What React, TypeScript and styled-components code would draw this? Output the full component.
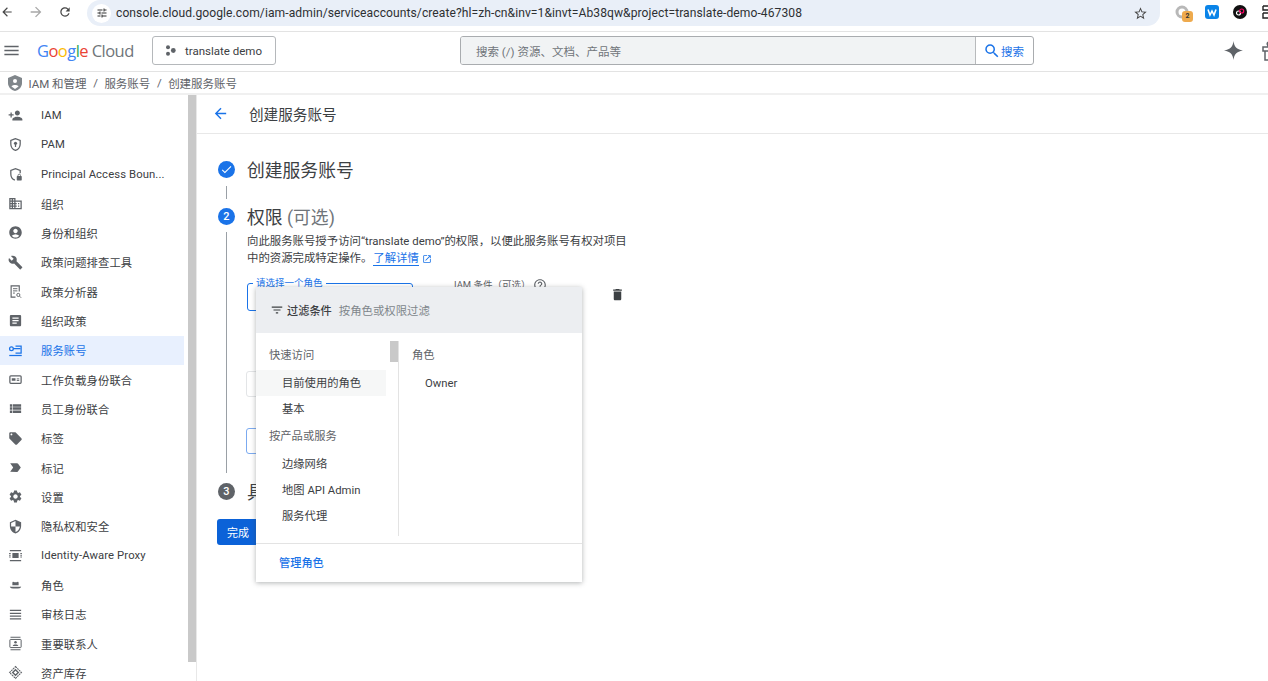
import React from "react";
import styled, { createGlobalStyle } from "styled-components";
import {
  MdArrowBack,
  MdArrowForward,
  MdRefresh,
  MdTune,
  MdStarBorder,
  MdMenu,
  MdSearch,
  MdDelete,
  MdCheck,
  MdFilterList,
  MdOpenInNew,
  MdHelpOutline,
  MdPersonAdd,
  MdOutlineDomain,
  MdAccountCircle,
  MdBuild,
  MdArticle,
  MdViewList,
  MdLocalOffer,
  MdLabelImportant,
  MdSettings,
  MdSecurity,
} from "react-icons/md";

const SANS = `Roboto, "Noto Sans CJK SC", sans-serif`;

const GlobalStyle = createGlobalStyle`
  html, body {
    margin: 0;
    padding: 0;
    height: 100%;
    overflow: hidden;
    background: #fff;
    font-family: ${SANS};
    color: #3c4043;
  }
  * { box-sizing: border-box; }
`;

const Page = styled.div`
  width: 1268px;
  height: 681px;
  display: flex;
  flex-direction: column;
  overflow: hidden;
`;

/* browser chrome */
const BrowserBar = styled.div`
  height: 32px;
  flex: none;
  display: flex;
  align-items: flex-start;
  border-bottom: 1px solid #e3e3e3;
`;

const NavButton = styled.span<{ $off?: boolean; $w: number }>`
  width: ${({ $w }) => $w}px;
  margin-top: 4px;
  flex: none;
  display: flex;
  justify-content: center;
  color: ${({ $off }) => ($off ? "#a8a8a8" : "#474747")};
  svg { width: 16px; height: 16px; }
`;

const UrlPill = styled.div`
  width: 1073px;
  height: 26px;
  margin-left: 15px;
  flex: none;
  padding: 0 12px 0 5px;
  background: #e9eff8;
  border-radius: 13px;
  border-top-right-radius: 0;
  display: flex;
  align-items: center;
  gap: 5px;
`;

const SiteBadge = styled.span`
  width: 19px;
  height: 19px;
  border-radius: 50%;
  background: #fff;
  display: flex;
  align-items: center;
  justify-content: center;
  color: #333;
  svg { width: 12px; height: 12px; }
`;

const UrlText = styled.span`
  flex: 1;
  font: 400 12.1px ${SANS};
  color: #2e3033;
  white-space: nowrap;
  letter-spacing: 0.07px;
`;

const Extensions = styled.div`
  flex: 1;
  display: flex;
  align-items: center;
  margin-top: 5px;
  padding-left: 15px;
`;

const ExtSlot = styled.span<{ $w: number }>`
  width: ${({ $w }) => $w}px;
  flex: none;
  position: relative;
  display: flex;
`;

const ExtBadge = styled.span`
  position: absolute;
  left: 7px;
  top: 6px;
  width: 11px;
  height: 11px;
  border-radius: 3px;
  background: #eeaa4d;
  font: 700 7px/11px ${SANS};
  text-align: center;
  color: #333;
`;

/* console header */
const Header = styled.header`
  height: 40px;
  flex: none;
  display: flex;
  align-items: center;
  padding-bottom: 2px;
  border-bottom: 1px solid #e3e3e3;
`;

const Burger = styled.span`
  width: 38px;
  flex: none;
  padding-left: 2px;
  display: flex;
  color: #5f6368;
  svg { width: 19px; height: 19px; }
`;

const Logo = styled.div`
  width: 115px;
  flex: none;
  margin-left: -1px;
  font: 400 16.5px "Open Sans", ${SANS};
  letter-spacing: -0.55px;
  color: #70757a;
  white-space: nowrap;
`;

const LogoLetter = styled.span<{ $c: string }>`
  color: ${({ $c }) => $c};
`;

const ProjectButton = styled.div`
  width: 124px;
  height: 29px;
  flex: none;
  border: 1px solid #b5b8bb;
  border-radius: 3px;
  display: flex;
  align-items: center;
  gap: 9px;
  padding-left: 12px;
  font: 400 11.5px ${SANS};
  color: #3c4043;
`;

const SearchGroup = styled.div`
  margin-left: 184px;
  width: 574px;
  height: 29px;
  flex: none;
  display: flex;
  border: 1px solid #a9acaf;
  border-radius: 3px;
  overflow: hidden;
`;

const SearchInput = styled.div`
  flex: 1;
  background: #f1f3f4;
  border-right: 1px solid #b8babc;
  display: flex;
  align-items: center;
  padding-left: 15px;
  font: 400 11.5px ${SANS};
  color: #70757a;
`;

const SearchButton = styled.div`
  width: 57px;
  display: flex;
  align-items: center;
  padding-left: 7px;
  font: 400 11.5px ${SANS};
  color: #1a73e8;
  svg { width: 18px; height: 18px; }
`;

const HeaderIcons = styled.div`
  margin-left: 190px;
  display: flex;
  align-items: center;
  gap: 19px;
  color: #5f6368;
`;

/* breadcrumb */
const Crumbs = styled.nav`
  height: 23px;
  flex: none;
  display: flex;
  align-items: center;
  gap: 6.500px;
  padding-left: 8px;
  font: 400 11.5px ${SANS};
  color: #5f6368;
  border-bottom: 2px solid #f0f0f0;
`;

const CrumbShield = styled.span`
  display: flex;
  color: #80868b;
`;

/* body */
const Body = styled.div`
  flex: 1;
  min-height: 0;
  display: flex;
`;

const Sidebar = styled.aside`
  width: 197px;
  flex: none;
  display: flex;
  position: relative;
  border-right: 1px solid #e8e8e8;
  overflow: hidden;
`;

const NavList = styled.ul`
  list-style: none;
  margin: 6px 0 0;
  padding: 0;
  width: 184px;
  flex: none;
`;

const NavItem = styled.li<{ $active?: boolean }>`
  height: 29.33px;
  display: flex;
  align-items: center;
  padding-left: 8px;
  gap: 18px;
  font: 400 11.3px ${SANS};
  white-space: nowrap;
  background: ${({ $active }) => ($active ? "#e8f0fe" : "transparent")};
  color: ${({ $active }) => ($active ? "#1a73e8" : "#3c4043")};
  letter-spacing: 0.1px;
  svg {
    width: 15px;
    height: 15px;
    flex: none;
    color: ${({ $active }) => ($active ? "#1a73e8" : "#5f6368")};
  }
`;

const SideScrollThumb = styled.div`
  position: absolute;
  left: 188px;
  top: 0;
  width: 8px;
  height: 567px;
  background: #c9c9c9;
`;

const Main = styled.main`
  flex: 1;
  min-width: 0;
  position: relative;
`;

const TitleBar = styled.div`
  height: 39px;
  display: flex;
  align-items: center;
  padding: 0 0 2px 15px;
  gap: 20px;
  border-bottom: 1px solid #e8e8e8;
  font: 400 14.6px ${SANS};
  color: #3c4043;
  svg { width: 17px; height: 17px; color: #1a73e8; }
`;

const Steps = styled.div`
  padding: 23px 0 0 21px;
  width: 460px;
  display: flex;
  flex-direction: column;
`;

const StepHead = styled.div`
  display: flex;
  align-items: center;
  gap: 12px;
  height: 24px;
  font: 400 17.8px ${SANS};
  color: #3c4043;
`;

const StepDot = styled.span<{ $grey?: boolean }>`
  width: 17px;
  height: 17px;
  flex: none;
  border-radius: 50%;
  background: ${({ $grey }) => ($grey ? "#5f6368" : "#1a73e8")};
  color: #fff;
  font: 500 11px/17px ${SANS};
  text-align: center;
  display: flex;
  align-items: center;
  justify-content: center;
  svg { width: 13px; height: 13px; }
`;

const Optional = styled.span`
  color: #70757a;
`;

const Connector = styled.div`
  margin: 5px 0 5px 8px;
  width: 1px;
  height: 13px;
  background: #9aa0a6;
`;

const StepBody = styled.div`
  margin-left: 8px;
  margin-top: 4px;
  height: 241px;
  border-left: 1px solid #9aa0a6;
  padding: 1px 0 0 20px;
  display: flex;
  flex-direction: column;
`;

const DescLine = styled.div`
  height: 17px;
  font: 400 11.4px/17px ${SANS};
  color: #3c4043;
  white-space: nowrap;
  display: flex;
  align-items: center;
`;

const LearnMore = styled.a`
  color: #1a73e8;
  line-height: 14px;
  border-bottom: 1px solid #1a73e8;
  margin: 0 3px 0 1px;
`;

const RoleRow = styled.div`
  margin-top: 10px;
  height: 34px;
  display: flex;
  align-items: flex-start;
`;

const RoleField = styled.div`
  width: 166px;
  height: 28px;
  margin-top: 6px;
  border: 1.5px solid #1a73e8;
  border-radius: 3px;
  position: relative;
`;

const RoleLabel = styled.span`
  position: absolute;
  left: 5px;
  top: -7px;
  padding: 0 3px;
  background: #fff;
  font: 400 9.5px/12px ${SANS};
  color: #1a73e8;
`;

const ConditionLabel = styled.div`
  margin-left: 41px;
  margin-top: 1px;
  width: 156px;
  display: flex;
  align-items: center;
  gap: 2px;
  font: 400 9.500px/12px ${SANS};
  color: #5f6368;
  svg { width: 14px; height: 14px; }
`;

const Trash = styled.span`
  margin-top: 10px;
  color: #3c4043;
  display: flex;
  svg { width: 15px; height: 15px; }
`;

const GhostInput = styled.div`
  margin: 60px 0 0 -1px;
  width: 120px;
  height: 26px;
  border: 1px solid #e3e5e7;
  border-radius: 3px;
`;

const GhostButton = styled.div`
  margin: 31px 0 0 -1px;
  width: 120px;
  height: 26px;
  border: 1px solid #7baaf0;
  border-radius: 3px;
`;

const ThirdStep = styled(StepHead)`
  margin-top: 6px;
`;

const DoneButton = styled.button`
  margin: 16px 0 0 -1px;
  width: 60px;
  height: 26px;
  border: 0;
  border-radius: 3px;
  background: #0b62d8;
  color: #fff;
  padding: 0 0 0 10px;
  font: 400 11px ${SANS};
  text-align: left;
`;

/* role picker popup */
const Popup = styled.div`
  position: absolute;
  left: 59px;
  top: 192px;
  width: 326px;
  height: 295px;
  background: #fff;
  display: flex;
  flex-direction: column;
  box-shadow: 0 1px 5px rgba(60, 64, 67, 0.4);
`;

const PopupFilter = styled.div`
  height: 46px;
  flex: none;
  background: #eceef1;
  display: flex;
  align-items: center;
  padding-left: 14px;
  font: 500 11.2px ${SANS};
  color: #3c4043;
  svg { width: 14px; height: 14px; margin-right: 3px; }
`;

const FilterHint = styled.span`
  margin-left: 7px;
  font-weight: 400;
  font-size: 11.4px;
  color: #80868b;
`;

const PopupPanes = styled.div`
  flex: 1;
  min-height: 0;
  display: flex;
  padding-top: 8px;
`;

const LeftPane = styled.div`
  width: 143px;
  flex: none;
  height: 195px;
  border-right: 1px solid #e3e3e3;
  position: relative;
`;

const PaneThumb = styled.div`
  position: absolute;
  right: 0;
  top: 0;
  width: 8px;
  height: 21px;
  background: #c9c9c9;
`;

const GroupTitle = styled.div`
  height: 29px;
  padding-left: 13px;
  font: 400 11.3px/30px ${SANS};
  color: #5f6368;
`;

const PaneItem = styled.div<{ $hover?: boolean }>`
  height: 26px;
  width: 130px;
  padding: 1px 0 0 26px;
  font: 400 11.3px/26px ${SANS};
  color: #3c4043;
  background: ${({ $hover }) => ($hover ? "#f6f7f7" : "transparent")};
`;

const RightPane = styled.div`
  flex: 1;
`;

const PopupFooter = styled.div`
  height: 39px;
  flex: none;
  margin-top: 7px;
  padding: 0 0 2px 23px;
  border-top: 1px solid #e3e3e3;
  display: flex;
  align-items: center;
  font: 500 11.2px ${SANS};
  color: #1a73e8;
`;

/* side nav glyphs that the icon packages do not have */
const Glyph = ({ children }: { children: React.ReactNode }) => (
  <svg viewBox="0 0 24 24" fill="none" stroke="currentColor" strokeWidth="2">
    {children}
  </svg>
);

const PamIcon = () => (
  <Glyph>
    <path d="M12 2.500 4.500 5.500v5.500c0 4.800 3.200 8.800 7.500 10.500 4.300-1.700 7.500-5.700 7.500-10.500V5.500z" />
    <circle cx="12" cy="10" r="2.500" fill="currentColor" stroke="none" />
    <path d="M12 11v5" />
  </Glyph>
);

const BoundaryIcon = () => (
  <Glyph>
    <path d="M11 21C7 19.500 4.500 15.500 4.500 11V5.500L12 2.500l7.500 3V10" />
    <rect x="14" y="14.500" width="8" height="7" rx="1" fill="currentColor" stroke="none" />
    <path d="M16 15v-1.500a2 2 0 0 1 4 0V15" strokeWidth="1.300" />
  </Glyph>
);

const AnalyzerIcon = () => (
  <Glyph>
    <path d="M12 21H5V3h13v9" strokeWidth="1.800" />
    <path d="M8 7.500h7M8 11h7M8 14.500h3" strokeWidth="1.500" />
    <circle cx="16.500" cy="17.500" r="2.500" strokeWidth="1.500" />
    <path d="m18.500 19.500 2.500 2.500" strokeWidth="1.500" />
  </Glyph>
);

const ServiceAccountIcon = () => (
  <Glyph>
    <circle cx="5.500" cy="9" r="3" />
    <path d="M8.500 9H20" />
    <path d="M12 5h9v11h-9" />
    <path d="M2 20h20" />
  </Glyph>
);

const WorkloadIcon = () => (
  <Glyph>
    <rect x="3" y="6" width="18" height="12" rx="1.500" />
    <rect x="6" y="10" width="6" height="4" fill="currentColor" stroke="none" />
    <path d="M14 11h4M14 13.500h4" strokeWidth="1.500" />
  </Glyph>
);

const ProxyIcon = () => (
  <Glyph>
    <path d="M3 4h18M3 20h18" />
    <rect x="7" y="8" width="10" height="8" fill="currentColor" stroke="none" />
    <path d="M3 8v8M21 8v8" strokeDasharray="2 1.500" strokeWidth="2.500" />
  </Glyph>
);

const HatIcon = () => (
  <svg viewBox="0 0 24 24" fill="currentColor">
    <path d="M7 13V9.500C7 8 8 7.500 9 7.800c2 .6 4 .6 6 0 1-.3 2 .2 2 1.700V13z" />
    <path d="M3 15c3 .8 15 .8 18 0 0 2.500-3 3.500-9 3.500S3 17.500 3 15z" />
  </svg>
);

const AuditIcon = () => (
  <Glyph>
    <path d="M3 5.500h18M3 10h18M3 14.500h18M3 19h18" />
  </Glyph>
);

const ContactsIcon = () => (
  <Glyph>
    <path d="M4 2h16M4 22h16" strokeWidth="1.600" />
    <rect x="3" y="5.500" width="18" height="13" rx="1" strokeWidth="1.600" />
    <circle cx="12" cy="10" r="2" fill="currentColor" stroke="none" />
    <path d="M7.500 16c1-3 8-3 9 0z" fill="currentColor" stroke="none" />
  </Glyph>
);

const AssetIcon = () => (
  <Glyph>
    <path d="M12 2.500 21.500 12 12 21.500 2.500 12z" strokeWidth="1.800" strokeDasharray="3 1" />
    <path d="M12 7.500 16.500 12 12 16.500 7.500 12z" strokeWidth="2.200" />
  </Glyph>
);

const navItems: [React.ComponentType, string, boolean?][] = [
  [MdPersonAdd, "IAM"],
  [PamIcon, "PAM"],
  [BoundaryIcon, "Principal Access Boun..."],
  [MdOutlineDomain, "组织"],
  [MdAccountCircle, "身份和组织"],
  [MdBuild, "政策问题排查工具"],
  [AnalyzerIcon, "政策分析器"],
  [MdArticle, "组织政策"],
  [ServiceAccountIcon, "服务账号", true],
  [WorkloadIcon, "工作负载身份联合"],
  [MdViewList, "员工身份联合"],
  [MdLocalOffer, "标签"],
  [MdLabelImportant, "标记"],
  [MdSettings, "设置"],
  [MdSecurity, "隐私权和安全"],
  [ProxyIcon, "Identity-Aware Proxy"],
  [HatIcon, "角色"],
  [AuditIcon, "审核日志"],
  [ContactsIcon, "重要联系人"],
  [AssetIcon, "资产库存"],
];

const logoLetters: [string, string][] = [
  ["G", "#4285f4"],
  ["o", "#ea4335"],
  ["o", "#fbbc04"],
  ["g", "#4285f4"],
  ["l", "#34a853"],
  ["e", "#ea4335"],
];

const App = () => {
  return (
    <Page>
      <GlobalStyle />
      <BrowserBar>
        <NavButton $w={14}>
          <MdArrowBack />
        </NavButton>
        <NavButton $off $w={44}>
          <MdArrowForward />
        </NavButton>
        <NavButton $w={14}>
          <MdRefresh />
        </NavButton>
        <UrlPill>
          <SiteBadge>
            <MdTune />
          </SiteBadge>
          <UrlText>
            console.cloud.google.com/iam-admin/serviceaccounts/create?hl=zh-cn&amp;inv=1&amp;invt=Ab38qw&amp;project=translate-demo-467308
          </UrlText>
          <MdStarBorder size={15} color="#474747" />
        </UrlPill>
        <Extensions>
          <ExtSlot $w={30}>
            <svg width="14" height="14" viewBox="0 0 14 14">
              <circle cx="7" cy="7" r="5" fill="none" stroke="#b8b8b8" strokeWidth="3" />
            </svg>
            <ExtBadge>2</ExtBadge>
          </ExtSlot>
          <ExtSlot $w={28}>
            <svg width="14" height="14" viewBox="0 0 14 14">
              <rect width="14" height="14" rx="3" fill="#0a84e8" />
              <path d="M3 4.500 5 10 7 6 9 10 11 4.500" fill="none" stroke="#fff" strokeWidth="1.600" />
            </svg>
          </ExtSlot>
          <ExtSlot $w={29}>
            <svg width="14" height="14" viewBox="0 0 14 14">
              <circle cx="7" cy="7" r="7" fill="#111" />
              <circle cx="5.500" cy="8" r="2" fill="none" stroke="#fff" strokeWidth="1.200" />
              <circle cx="8.700" cy="6" r="2" fill="none" stroke="#f06" strokeWidth="1.200" />
            </svg>
          </ExtSlot>
          <svg width="10" height="14" viewBox="0 0 10 14">
            <path d="M1 1h9M1 1v4h9M1 8h9M1 8v5h9" fill="none" stroke="#222" strokeWidth="1.400" />
          </svg>
        </Extensions>
      </BrowserBar>

      <Header>
        <Burger>
          <MdMenu />
        </Burger>
        <Logo>
          {logoLetters.map(([l, c], i) => (
            <LogoLetter key={i} $c={c}>
              {l}
            </LogoLetter>
          ))}{" "}
          Cloud
        </Logo>
        <ProjectButton>
          <svg width="11" height="11" viewBox="0 0 11 11">
            <circle cx="3" cy="2.200" r="2" fill="#5f6368" />
            <circle cx="8.300" cy="5.500" r="2.400" fill="#5f6368" />
            <circle cx="3" cy="8.800" r="2" fill="#5f6368" />
          </svg>
          translate demo
        </ProjectButton>
        <SearchGroup>
          <SearchInput>搜索 (/) 资源、文档、产品等</SearchInput>
          <SearchButton>
            <MdSearch />
            搜索
          </SearchButton>
        </SearchGroup>
        <HeaderIcons>
          <svg width="19" height="19" viewBox="0 0 20 20">
            <path d="M10 0c.8 6 3 8.600 10 10-7 1.400-9.200 4-10 10-.8-6-3-8.600-10-10 7-1.400 9.200-4 10-10z" fill="#5f6368" />
          </svg>
          <svg width="18" height="20" viewBox="0 0 18 20">
            <path d="M1 6h16v4H1zM3 10v9h12v-9M9 6v13M9 6C5 6 4 1 7 1s2 5 2 5 0-5 3-5 1 5-3 5" fill="none" stroke="#5f6368" strokeWidth="1.500" />
          </svg>
        </HeaderIcons>
      </Header>

      <Crumbs>
        <CrumbShield>
          <svg width="14" height="16" viewBox="0 0 14 16">
            <path d="M7 0 14 3v5c0 4-3 7-7 8-4-1-7-4-7-8V3z" fill="#80868b" />
            <circle cx="7" cy="6" r="2" fill="#fff" />
            <path d="M3.500 11.500c.6-2 6.400-2 7 0L7 14z" fill="#fff" />
          </svg>
        </CrumbShield>
        <span>IAM 和管理</span>
        <span>/</span>
        <span>服务账号</span>
        <span>/</span>
        <span>创建服务账号</span>
      </Crumbs>

      <Body>
        <Sidebar>
          <NavList>
            {navItems.map(([Icon, label, active]) => (
              <NavItem key={label} $active={active}>
                <Icon />
                {label}
              </NavItem>
            ))}
          </NavList>
          <SideScrollThumb />
        </Sidebar>

        <Main>
          <TitleBar>
            <MdArrowBack />
            创建服务账号
          </TitleBar>
          <Steps>
            <StepHead>
              <StepDot>
                <MdCheck />
              </StepDot>
              创建服务账号
            </StepHead>
            <Connector />
            <StepHead>
              <StepDot>2</StepDot>
              <span>
                权限 <Optional>(可选)</Optional>
              </span>
            </StepHead>
            <StepBody>
              <DescLine>向此服务账号授予访问“translate demo”的权限，以便此服务账号有权对项目</DescLine>
              <DescLine>
                中的资源完成特定操作。
                <LearnMore>了解详情</LearnMore>
                <MdOpenInNew size={10} color="#1a73e8" />
              </DescLine>
              <RoleRow>
                <RoleField>
                  <RoleLabel>请选择一个角色</RoleLabel>
                </RoleField>
                <ConditionLabel>
                  IAM 条件（可选）
                  <MdHelpOutline />
                </ConditionLabel>
                <Trash>
                  <MdDelete />
                </Trash>
              </RoleRow>
              <GhostInput />
              <GhostButton />
            </StepBody>
            <ThirdStep>
              <StepDot $grey>3</StepDot>
              具体
            </ThirdStep>
            <DoneButton>完成</DoneButton>
          </Steps>

          <Popup>
            <PopupFilter>
              <MdFilterList />
              过滤条件
              <FilterHint>按角色或权限过滤</FilterHint>
            </PopupFilter>
            <PopupPanes>
              <LeftPane>
                <PaneThumb />
                <GroupTitle>快速访问</GroupTitle>
                <PaneItem $hover>目前使用的角色</PaneItem>
                <PaneItem>基本</PaneItem>
                <GroupTitle>按产品或服务</GroupTitle>
                <PaneItem>边缘网络</PaneItem>
                <PaneItem>地图 API Admin</PaneItem>
                <PaneItem>服务代理</PaneItem>
              </LeftPane>
              <RightPane>
                <GroupTitle>角色</GroupTitle>
                <PaneItem>Owner</PaneItem>
              </RightPane>
            </PopupPanes>
            <PopupFooter>管理角色</PopupFooter>
          </Popup>
        </Main>
      </Body>
    </Page>
  );
};

export default App;
